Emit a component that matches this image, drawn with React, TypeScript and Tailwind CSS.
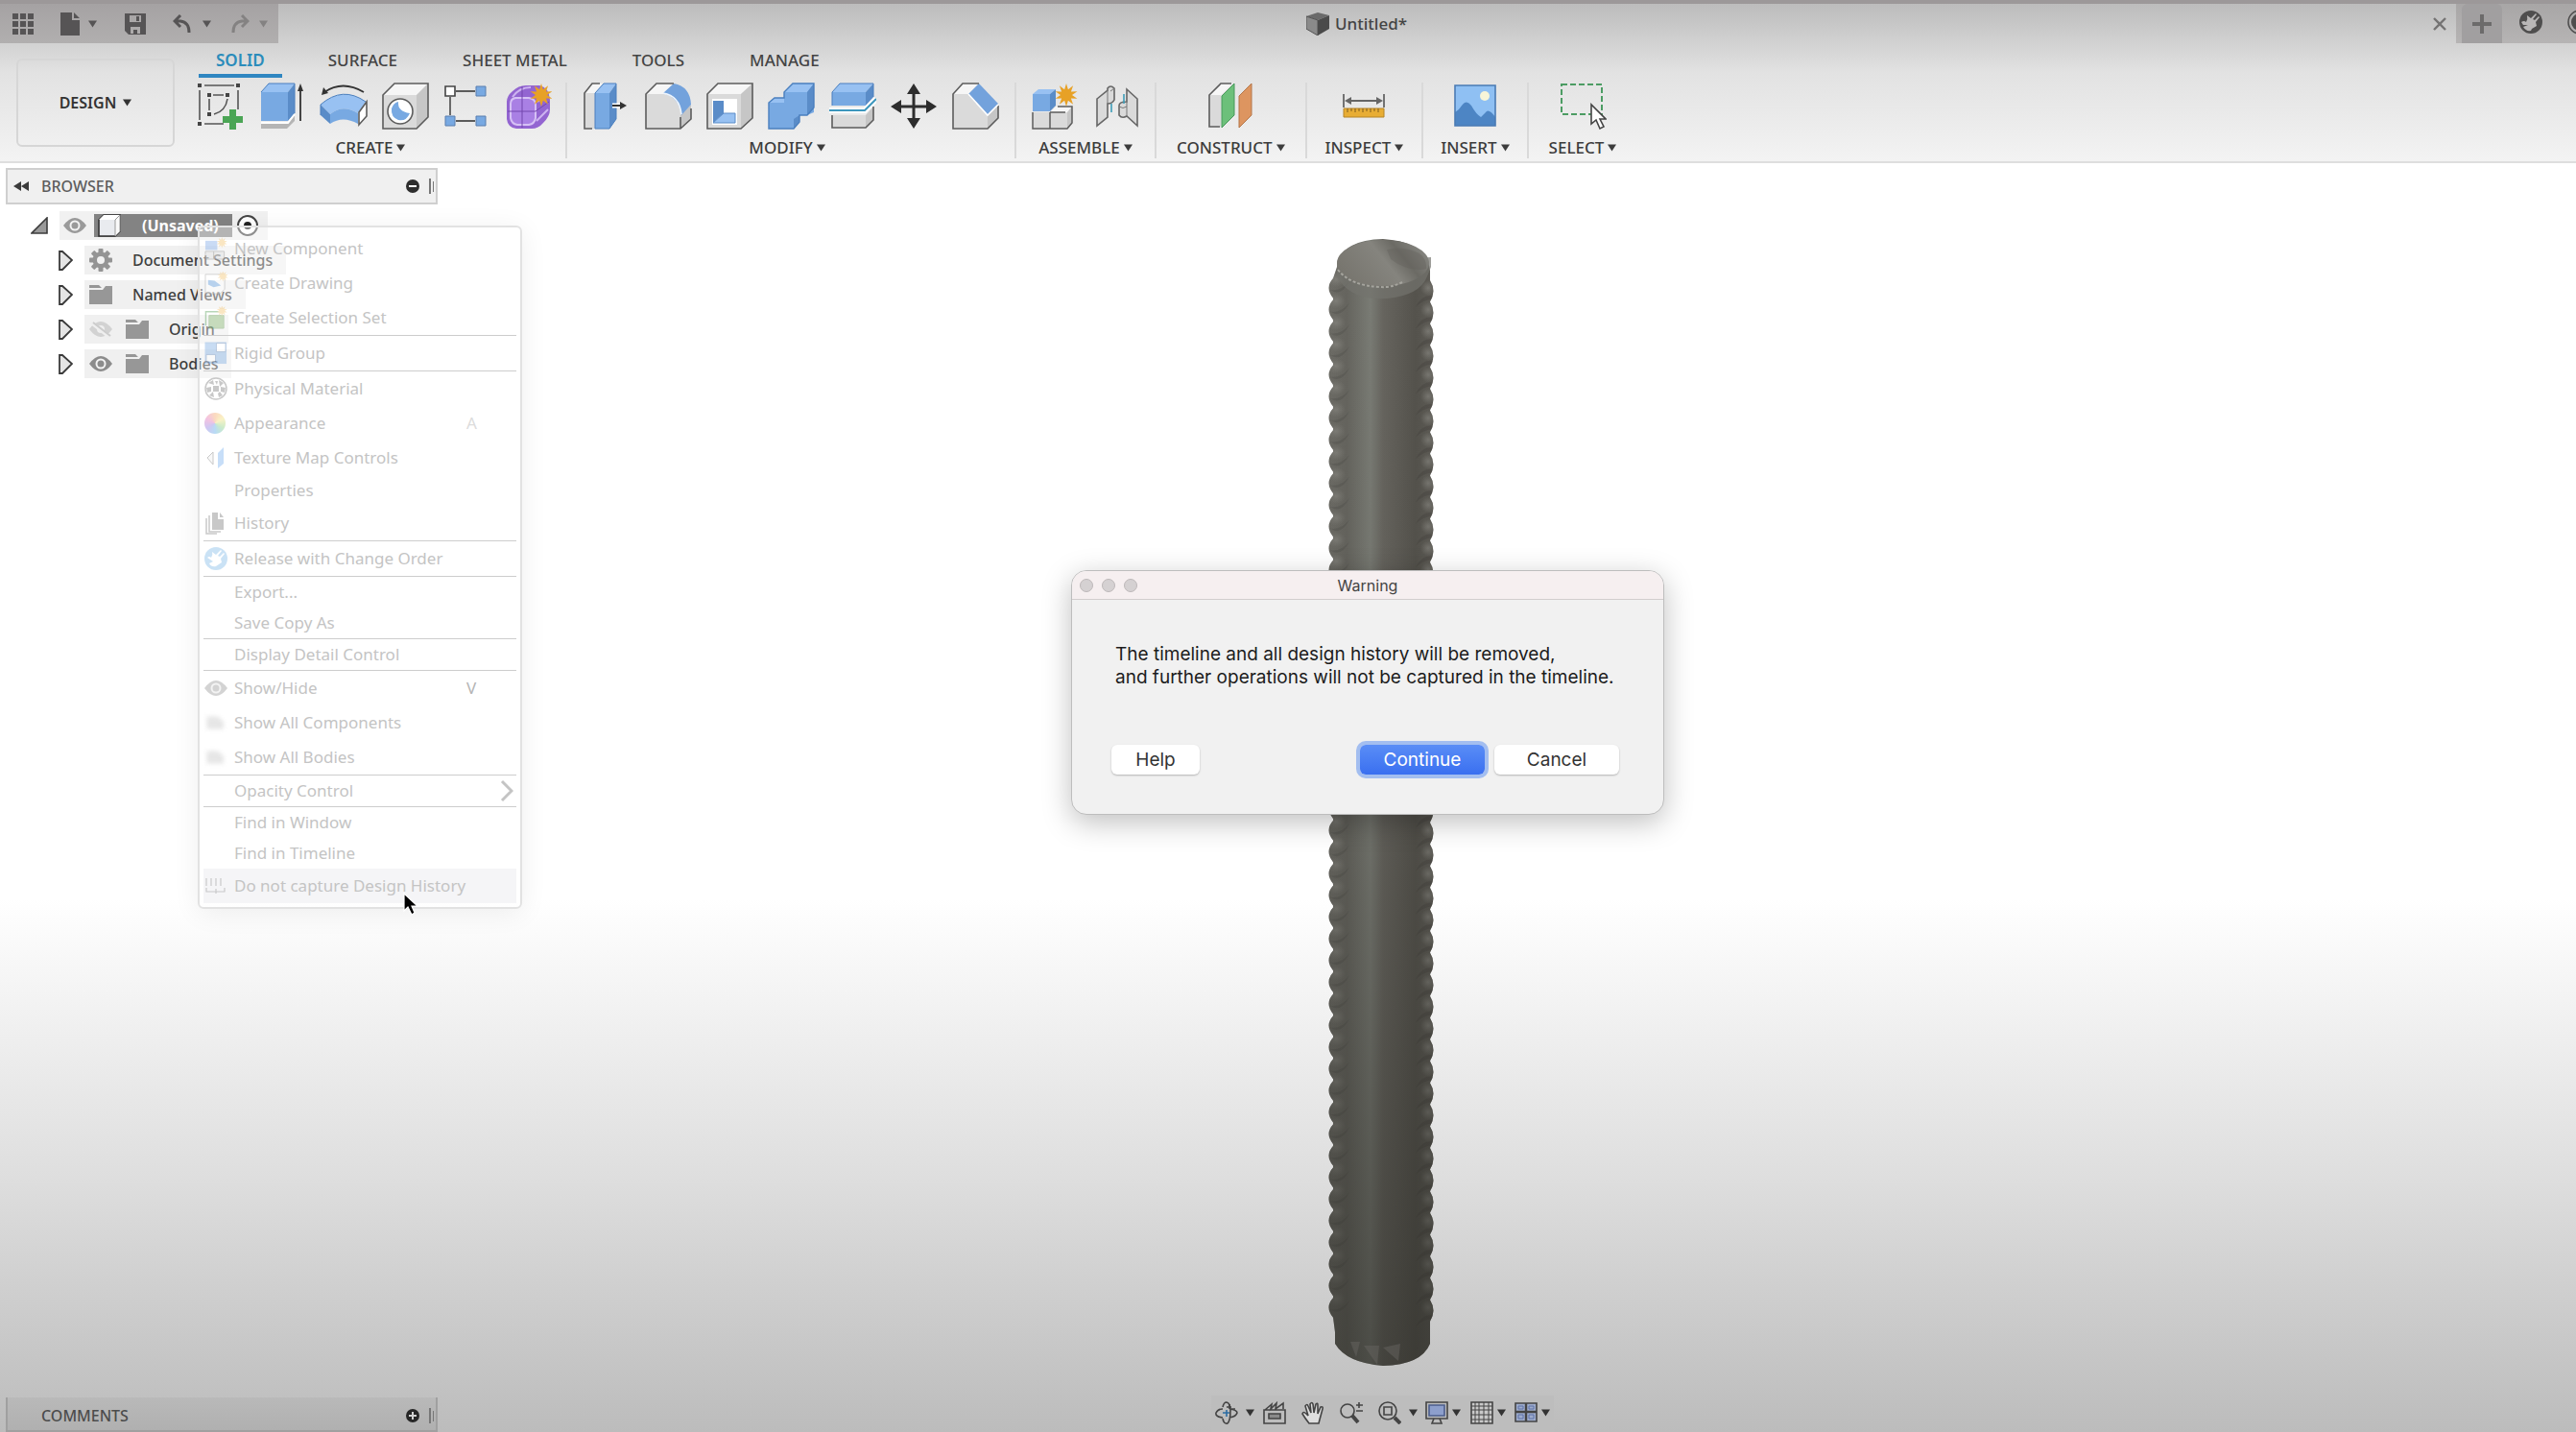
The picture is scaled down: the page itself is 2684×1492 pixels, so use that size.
import type { ReactNode } from "react";
import clsx from "clsx";

const EDGE = "#5c5c5c";
const BLUE = "#78a9e2";
const BLUE_TOP = "#98c1f2";
const BLUE_SIDE = "#5a8cc8";
const GREY = "#dadada";
const GREY_TOP = "#f6f6f6";
const GREY_SIDE = "#c6c6c6";

function Caret({ className }: { className?: string }) {
  return (
    <svg viewBox="0 0 10 8" className={clsx("h-2 w-[9px] shrink-0", className)} aria-hidden="true">
      <path d="M0 0H10L5 8Z" fill="currentColor" />
    </svg>
  );
}

function Star({ x, y, faint }: { x: number; y: number; faint?: boolean }) {
  const points = Array.from({ length: 20 }, (_, i) => {
    const r = i % 2 ? 6 : 12;
    const a = (i * Math.PI) / 10;
    return `${(x + r * Math.sin(a)).toFixed(1)},${(y - r * Math.cos(a)).toFixed(1)}`;
  }).join(" ");
  return <polygon points={points} fill={faint ? "#f3c169" : "#e7a126"} />;
}

function ToolIcon({ children }: { children: ReactNode }) {
  return (
    <svg viewBox="0 0 50 50" className="h-[50px] w-[50px]" fill="none" aria-hidden="true">
      {children}
    </svg>
  );
}

const icons: Record<string, ReactNode> = {
  "Create Sketch": (
    <ToolIcon>
      <path d="M8 3H39M3 8V39M8 43H28M43 8V28M17 13H28M13 17V29M32 17Q30 30 18 33" stroke="#555" strokeWidth="1.6" />
      <path d="M1 1h4v4h-4zM41 1h4v4h-4zM1 41h4v4h-4zM11 11h4v4h-4zM30 11h4v4h-4zM11 31h4v4h-4z" fill="#444" />
      <path d="M34 28h7v7h7v7h-7v7h-7v-7h-7v-7h7z" fill="#4ba555" />
    </ToolIcon>
  ),
  Extrude: (
    <ToolIcon>
      <path d="M3 43H30L38 34V40L30 48H3Z" fill="#b5b5b5" />
      <path d="M3 10H31V40H3Z" fill={BLUE} />
      <path d="M3 10L11 1H38L31 10Z" fill={BLUE_TOP} />
      <path d="M31 10L38 1V32L31 40Z" fill={BLUE_SIDE} />
      <path d="M3 42H31L38 33" stroke="#fff" strokeWidth="2" />
      <path d="M3 10L11 1H38V32" stroke="#4a7fbe" />
      <path d="M44 8V40" stroke="#333" strokeWidth="1.8" />
      <path d="M44 1L47 9H41Z" fill="#333" />
    </ToolIcon>
  ),
  Revolve: (
    <ToolIcon>
      <path d="M46 10Q24 -3 5 10" stroke="#333" strokeWidth="1.8" />
      <path d="M2 13L4 5L9 11Z" fill="#333" />
      <path d="M1 23Q24 3 48 20L40 32Q24 22 11 33Z" fill={BLUE_TOP} />
      <path d="M1 23L11 33V43L1 34Z" fill={BLUE_SIDE} />
      <path d="M11 33Q24 22 40 32V43Q24 34 11 43Z" fill={BLUE} />
      <path d="M1 34V23Q24 3 48 20" stroke="#4a7fbe" />
      <path d="M41 31L49 20V35L41 44Z" fill="#fff" stroke={EDGE} strokeWidth="1.6" />
    </ToolIcon>
  ),
  Hole: (
    <ToolIcon>
      <path d="M2 13H37V48H2Z" fill={GREY} />
      <path d="M2 13L14 1H49L37 13Z" fill={GREY_TOP} />
      <path d="M37 13L49 1V36L37 48Z" fill={GREY_SIDE} />
      <path d="M2 13L14 1H49V36L37 48H2Z" stroke={EDGE} strokeWidth="1.6" />
      <circle cx="20" cy="30" r="13" fill="#fff" stroke={EDGE} strokeWidth="1.6" />
      <path d="M18 20Q17 30 30 32Q26 41 18 39Q10 36 11 27Q13 21 18 20Z" fill={BLUE} />
    </ToolIcon>
  ),
  Pattern: (
    <ToolIcon>
      <path d="M14 9H34M8 15V34M14 40H34" stroke={EDGE} strokeWidth="1.8" />
      <path d="M3 4h10v10h-10z" fill="#fff" stroke="#444" strokeWidth="1.6" />
      <path d="M35 4h10v10h-10zM3 35h10v10h-10zM35 35h10v10h-10z" fill={BLUE} stroke="#5b7fae" />
    </ToolIcon>
  ),
  "Create Form": (
    <ToolIcon>
      <path d="M3 20Q3 14 9 9Q15 3 23 3H37Q47 5 48 18V28Q48 35 41 42Q36 48 29 48H13Q4 47 3 38Z" fill="#9365d1" />
      <path d="M7 22Q7 17 12 16H26Q33 17 33 23V37Q32 43 26 44H14Q8 43 7 37Z" fill="#a980e4" stroke="#d6c1f5" strokeWidth="2" />
      <path d="M9 15Q16 5 28 5M35 20L43 12M34 40L46 28" stroke="#cdb4f0" strokeWidth="2" />
      <path d="M19 4V47M4 30H33L47 20" stroke="#7247ad" />
      <Star x={39} y={13} />
    </ToolIcon>
  ),
  "Press Pull": (
    <ToolIcon>
      <path d="M2 11H13V48H2Z" fill={GREY} />
      <path d="M2 11L10 1H21L13 11Z" fill={GREY_TOP} />
      <path d="M10 48H2V11L10 1H18" stroke={EDGE} strokeWidth="1.6" />
      <path d="M13 11H28V48H13Z" fill={BLUE} />
      <path d="M13 11L22 1H35L28 11Z" fill={BLUE_TOP} />
      <path d="M28 11L35 1V38L28 48Z" fill={BLUE_SIDE} />
      <path d="M13 48V11L22 1H35V38L28 48Z" stroke="#4a7fbe" />
      <path d="M31 24H42" stroke="#fff" strokeWidth="5" />
      <path d="M31 24H42" stroke="#333" strokeWidth="2" />
      <path d="M39 20L46 24L39 28Z" fill="#333" />
    </ToolIcon>
  ),
  Fillet: (
    <ToolIcon>
      <path d="M2 12H20Q37 14 38 35V48H2Z" fill={GREY} />
      <path d="M2 12L13 1H31L20 12Z" fill={GREY_TOP} />
      <path d="M38 34L49 23V38L38 48Z" fill={GREY_SIDE} />
      <path d="M20 11L31 1Q48 4 49 23L39 34Q37 16 20 11Z" fill="#73a2dc" />
      <path d="M31 1H13L2 12V48H38L49 38V27M38 48V36" stroke={EDGE} strokeWidth="1.6" />
      <path d="M20 11Q37 14 39 33" stroke="#eef5fd" strokeWidth="1.6" />
    </ToolIcon>
  ),
  Shell: (
    <ToolIcon>
      <path d="M2 12H37V48H2Z" fill={GREY} />
      <path d="M2 12L13 1H49L37 12Z" fill={GREY_TOP} />
      <path d="M37 12L49 1V37L37 48Z" fill={GREY_SIDE} />
      <path d="M2 12L13 1H49V37L37 48H2Z" stroke={EDGE} strokeWidth="1.6" />
      <path d="M7 17H33V44H7Z" fill="#fff" />
      <path d="M8 19H19V32L8 42Z" fill={BLUE_SIDE} />
      <path d="M19 32H31V42H8Z" fill={BLUE_TOP} stroke={BLUE_SIDE} />
    </ToolIcon>
  ),
  Combine: (
    <ToolIcon>
      <path d="M2 21L8 16H18V10L27 1H49V31L42 34H34V40L28 48H2Z" fill={BLUE} />
      <path d="M18 10L27 1H49L42 10ZM2 21L8 16H18V21Z" fill={BLUE_TOP} />
      <path d="M42 10L49 1V26L42 34ZM28 38L34 34V40L28 48Z" fill={BLUE_SIDE} />
      <path d="M2 21L8 16H18V10L27 1H49V26L42 34H34V41L28 48H2Z" stroke="#4a7fbe" strokeWidth="1.4" />
    </ToolIcon>
  ),
  "Split Body": (
    <ToolIcon>
      <path d="M4 10H39V24H4Z" fill={BLUE} />
      <path d="M4 10L12 1H47L39 10Z" fill={BLUE_TOP} />
      <path d="M39 10L47 1V15L39 24Z" fill={BLUE_SIDE} />
      <path d="M4 24V10L12 1H47V15" stroke="#4a7fbe" />
      <path d="M4 34H39V47H4Z" fill={GREY} />
      <path d="M39 34L47 25V39L39 47Z" fill={GREY_SIDE} />
      <path d="M4 34V47H39L47 39V25" stroke={EDGE} strokeWidth="1.6" />
      <path d="M1 29H38L50 17" stroke="#fff" strokeWidth="6" />
      <path d="M1 29H38L50 17" stroke="#3d97bd" strokeWidth="2" />
    </ToolIcon>
  ),
  Move: (
    <ToolIcon>
      <path d="M25 8V41M8 25H42" stroke="#2d2d2d" strokeWidth="3" />
      <path d="M25 1L32 12H18ZM25 48L32 37H18ZM1 25L12 18V32ZM49 25L38 18V32Z" fill="#2d2d2d" />
    </ToolIcon>
  ),
  Chamfer: (
    <ToolIcon>
      <path d="M2 12H18L38 34V48H2Z" fill={GREY} />
      <path d="M2 12L12 1H29L18 12Z" fill={GREY_TOP} />
      <path d="M38 34L49 22V37L38 48Z" fill={GREY_SIDE} />
      <path d="M18 12L29 1L49 22L38 34Z" fill="#73a2dc" />
      <path d="M29 1H12L2 12V48H38L49 37V24" stroke={EDGE} strokeWidth="1.6" />
      <path d="M18 12L38 34L49 23" stroke="#fff" strokeWidth="1.6" />
    </ToolIcon>
  ),
  "New Component": (
    <ToolIcon>
      <path d="M2 31H20V48H2ZM20 31H38V48H20Z" fill={GREY} />
      <path d="M20 31L26 25H43L38 31Z" fill={GREY_TOP} />
      <path d="M38 31L43 25V42L38 48Z" fill={GREY_SIDE} />
      <path d="M2 31V48H38L43 42V25H28M20 31V48M20 31H36" stroke={EDGE} strokeWidth="1.5" />
      <path d="M2 12H20V30H2Z" fill={BLUE} />
      <path d="M2 12L8 7H26L20 12Z" fill={BLUE_TOP} />
      <path d="M20 12L26 7V24L20 30Z" fill={BLUE_SIDE} />
      <Star x={37} y={13} />
    </ToolIcon>
  ),
  Joint: (
    <ToolIcon>
      <path d="M5 17L16 8V6Q19 2 23 6V18Q21 22 16 22V36L5 45Z" fill={GREY} stroke="#666" strokeWidth="1.6" />
      <path d="M16 8V22M23 6L19 9" stroke="#777" />
      <path d="M47 17L36 7V20Q28 20 28 24V34Q31 38 36 35L47 45Z" fill={GREY} stroke="#666" strokeWidth="1.6" />
      <path d="M36 20V35M28 25Q32 28 36 25" stroke="#777" />
      <path d="M20 22V31M33 12V22" stroke="#3d9db8" strokeWidth="1.6" />
    </ToolIcon>
  ),
  "Offset Plane": (
    <ToolIcon>
      <path d="M3 13H15V46H3Z" fill={GREY} />
      <path d="M3 13L15 1H27L15 13Z" fill={GREY_TOP} />
      <path d="M14 46H3V13L15 1H26" stroke={EDGE} strokeWidth="1.6" />
      <path d="M16 14L29 1V34L16 47Z" fill="#6cc07a" stroke="#47985a" />
      <path d="M34 14L47 1V34L34 47Z" fill="#dd9560" stroke="#b4774b" />
    </ToolIcon>
  ),
  Measure: (
    <ToolIcon>
      <path d="M4 12V26M46 12V26M8 19H42" stroke="#666" strokeWidth="1.8" />
      <path d="M5 19L12 15V23ZM45 19L38 15V23Z" fill="#666" />
      <path d="M4 27H46V36H4Z" fill="#e8ad34" stroke="#b58427" />
      <path d="M8 27v4M12 27v3M16 27v4M20 27v3M24 27v4M28 27v3M32 27v4M36 27v3M40 27v4" stroke="#7c5b1c" />
    </ToolIcon>
  ),
  "Insert Canvas": (
    <ToolIcon>
      <path d="M4 3H46V45H4Z" fill="#8fc0f3" />
      <path d="M4 31Q8 29 11 24Q16 17 21 24Q26 33 31 36L37 30Q40 28 46 36V45H4Z" fill="#4d85c4" />
      <circle cx="35" cy="14" r="5" fill="#f7f5d8" />
      <path d="M4 3H46V45H4Z" stroke="#4a7bb4" strokeWidth="1.6" />
    </ToolIcon>
  ),
  "Window Select": (
    <ToolIcon>
      <path d="M3 2H45V33H3Z" stroke="#4c9c63" strokeWidth="2" strokeDasharray="6 3" />
      <path d="M34 23V43L39 39L43 48L47 46L43 38H49Z" fill="#fff" stroke="#444" strokeWidth="1.6" />
    </ToolIcon>
  ),
};

const tabs = ["SOLID", "SURFACE", "SHEET METAL", "TOOLS", "MANAGE"];

const groups = [
  { label: "CREATE", pad: "px-[14px]", tools: ["Create Sketch", "Extrude", "Revolve", "Hole", "Pattern", "Create Form"] },
  { label: "MODIFY", pad: "px-[16px]", tools: ["Press Pull", "Fillet", "Shell", "Combine", "Split Body", "Move", "Chamfer"] },
  { label: "ASSEMBLE", pad: "px-[15px]", tools: ["New Component", "Joint"] },
  { label: "CONSTRUCT", pad: "px-[21px]", tools: ["Offset Plane"] },
  { label: "INSPECT", pad: "px-[19px]", tools: ["Measure"] },
  { label: "INSERT", pad: "px-[18px]", tools: ["Insert Canvas"] },
  { label: "SELECT", pad: "px-[21px]", tools: ["Window Select"] },
];

function GearHead({ className }: { className?: string }) {
  return (
    <svg viewBox="0 0 24 24" className={className} aria-hidden="true">
      <circle cx="12" cy="12" r="12" fill="currentColor" />
      <path
        d="M2 12Q5 10 7 12Q9 9 8 5L12 8L17 3L18 4L14 9L16 10L20 6L21 7L17 12L18 16L13 19L12 21Q7 22 4 17L9 15L4 15Z"
        fill="#b9b7b7"
      />
    </svg>
  );
}

function TitleBar() {
  return (
    <div className="flex h-[45px] items-stretch border-t-4 border-[#9c9899]">
      <div className="flex w-[290px] items-center bg-linear-to-b from-[#a5a2a3] to-[#b1afaf] pl-[13px] text-[#565455]">
        <button aria-label="Show Data Panel" className="mr-[28px]">
          <svg viewBox="0 0 22 22" className="h-[22px] w-[22px]" fill="currentColor">
            <path d="M0 0h6v6H0zM8 0h6v6H8zM16 0h6v6h-6zM0 8h6v6H0zM8 8h6v6H8zM16 8h6v6h-6zM0 16h6v6H0zM8 16h6v6H8zM16 16h6v6h-6z" />
          </svg>
        </button>
        <button aria-label="File" className="mr-[29px] flex items-center gap-[9px]">
          <svg viewBox="0 0 20 24" className="h-6 w-5" fill="currentColor">
            <path d="M0 0H12V8H20V24H0ZM14 0L20 6H14Z" />
          </svg>
          <Caret />
        </button>
        <button aria-label="Save" className="mr-[28px]">
          <svg viewBox="0 0 22 22" className="h-[22px] w-[22px]" fill="currentColor" fillRule="evenodd">
            <path d="M0 0H22V22H4L0 18ZM5 2V9H17V2ZM6 14V21H9V17H13V21H16V14ZM12 3H15V8H12Z" />
          </svg>
        </button>
        <button aria-label="Undo" className="mr-[20px] flex items-center gap-[11px]">
          <svg viewBox="0 0 20 20" className="h-5 w-5" fill="none" stroke="currentColor" strokeWidth="3">
            <path d="M8 1L2 7L8 13M2 7H8Q17 8 17 19" />
          </svg>
          <Caret />
        </button>
        <button aria-label="Redo" className="flex items-center gap-[10px] text-[#848282]">
          <svg viewBox="0 0 20 20" className="h-5 w-5" fill="none" stroke="currentColor" strokeWidth="3">
            <path d="M12 1L18 7L12 13M18 7H12Q3 8 3 19" />
          </svg>
          <Caret />
        </button>
      </div>
      <div className="flex flex-1 items-center rounded-t-md pr-[10px]">
        <div className="flex flex-1 items-center justify-center gap-[6px] pl-[2px] text-[17px] font-medium text-[#444]">
          <svg viewBox="0 0 24 24" className="h-6 w-6" aria-hidden="true">
            <path d="M0 4L12 0L24 3L12 8Z" fill="#6a6a6a" />
            <path d="M0 4L12 8V24L0 17Z" fill="#8a8a8a" stroke="#555" />
            <path d="M12 8L24 3V17L12 24Z" fill="#4a4a4a" />
          </svg>
          Untitled*
        </div>
        <button aria-label="Close tab" className="text-[#747373]">
          <svg viewBox="0 0 14 14" className="h-[14px] w-[14px]" stroke="currentColor" strokeWidth="2.4">
            <path d="M1 1L13 13M13 1L1 13" />
          </svg>
        </button>
      </div>
      <div className="flex w-[125px] items-center overflow-hidden bg-linear-to-b from-[#a8a6a6] to-[#b6b4b4] pl-[6px] text-[#4f4e4e]">
        <button aria-label="New tab" className="mr-[18px] flex h-full w-[42px] shrink-0 items-center justify-center rounded-t-md bg-[#a19fa0] text-[#6c6b6b]">
          <svg viewBox="0 0 20 20" className="h-5 w-5" fill="currentColor">
            <path d="M8 0h4v8h8v4h-8v8h-4v-8h-8v-4h8z" />
          </svg>
        </button>
        <button aria-label="Job status" className="mb-1 mr-[26px] shrink-0">
          <GearHead className="h-6 w-6" />
        </button>
        <button aria-label="Profile" className="mb-1 shrink-0">
          <svg viewBox="0 0 26 26" className="h-[26px] w-[26px]">
            <circle cx="13" cy="13" r="12" fill="none" stroke="currentColor" strokeWidth="1.6" />
            <circle cx="13" cy="13" r="9" fill="currentColor" />
          </svg>
        </button>
      </div>
    </div>
  );
}

function Ribbon() {
  return (
    <div className="flex text-[17px] leading-5 font-medium text-[#444]">
      <button className="mt-4 ml-[17px] flex h-[92px] w-[165px] items-center justify-center gap-[7px] rounded-md border-2 border-[#d6d6d6] text-[16px] font-semibold text-[#333]">
        DESIGN
        <Caret />
      </button>
      <div className="ml-[9px]">
        <nav className="flex gap-[22px] pl-4">
          {tabs.map((tab, i) => (
            <button
              key={tab}
              className={clsx(
                "h-9 border-b-4 pt-1",
                i === 0 ? "mr-[3px] border-[#2f86c1] px-[18px] font-semibold text-[#2b8cbb]" : "border-transparent px-[23px]",
              )}
            >
              {tab}
            </button>
          ))}
        </nav>
        <div className="mt-[5px] flex">
          {groups.map(({ label, pad, tools }, g) => (
            <div
              key={label}
              className={clsx("mb-[3px] flex h-[79px] flex-col items-center", pad, g < groups.length - 1 && "border-r-2 border-[#d9d9d9]")}
            >
              <div className="flex gap-[14px]">
                {tools.map((tool) => (
                  <button key={tool} aria-label={tool}>
                    {icons[tool]}
                  </button>
                ))}
              </div>
              <button className={clsx("mt-2 flex items-center gap-1 text-[#3c3c3c]", tools.length > 2 && "mr-2")}>
                {label}
                <Caret />
              </button>
            </div>
          ))}
        </div>
      </div>
    </div>
  );
}

function Eye({ className }: { className?: string }) {
  return (
    <svg viewBox="0 0 24 16" className={clsx("h-4 w-6 shrink-0", className)} aria-hidden="true">
      <path d="M0 8Q12 -8 24 8Q12 24 0 8Z" fill="currentColor" />
      <circle cx="12" cy="8" r="5.500" fill="#f3f3f3" />
      <circle cx="12" cy="8" r="3.500" fill="currentColor" />
    </svg>
  );
}

function EyeOff() {
  return (
    <svg viewBox="0 0 24 18" className="h-[18px] w-6 shrink-0" aria-hidden="true">
      <path d="M0 9Q12 -7 24 9Q12 25 0 9Z" fill="#d2d2d2" />
      <circle cx="12" cy="9" r="4" fill="#efefef" />
      <path d="M2 2L21 17" stroke="#efefef" strokeWidth="4" />
      <path d="M4 2L22 16" stroke="#cccccc" strokeWidth="2" />
    </svg>
  );
}

function Folder() {
  return (
    <svg viewBox="0 0 24 20" className="h-5 w-6 shrink-0" aria-hidden="true">
      <path d="M0 0H10L13 3H0ZM0 5H14L17 1H24V20H0Z" fill="#979797" />
    </svg>
  );
}

function Gear() {
  return (
    <svg viewBox="0 0 24 24" className="h-6 w-6 shrink-0" aria-hidden="true">
      <g fill="#949494">
        {[0, 45, 90, 135].map((angle) => (
          <rect key={angle} x="9.500" y="0" width="5" height="24" rx="1" transform={`rotate(${angle} 12 12)`} />
        ))}
        <circle cx="12" cy="12" r="8.500" />
      </g>
      <circle cx="12" cy="12" r="4" fill="#f1f1f1" />
    </svg>
  );
}

const tree = [
  { label: "Document Settings", leading: [<Gear key="gear" />] },
  { label: "Named Views", leading: [<Folder key="folder" />] },
  { label: "Origin", leading: [<EyeOff key="eye" />, <Folder key="folder" />] },
  { label: "Bodies", leading: [<Eye key="eye" className="text-[#8c8c8c]" />, <Folder key="folder" />] },
];

function Grip() {
  return (
    <svg viewBox="0 0 5 16" className="h-4 w-[5px]" aria-hidden="true">
      <path d="M0 0H2V16H0ZM4 3H5V14H4Z" fill="#777" />
    </svg>
  );
}

function Browser() {
  return (
    <aside className="w-[456px] pt-[5px] pl-[6px] text-[16px] leading-5 font-medium text-[#444]">
      <div className="flex h-[38px] items-center border-2 border-[#cfcfcf] bg-[#f0f0f0] pr-[2px] pl-[6px]">
        <button aria-label="Collapse browser">
          <svg viewBox="0 0 16 10" className="h-[10px] w-4">
            <path d="M8 0V10L0 5ZM16 0V10L8 5Z" fill="#3b3b3b" />
          </svg>
        </button>
        <span className="ml-[13px] flex-1 text-[#5c5c5c]">BROWSER</span>
        <button aria-label="Hide browser contents" className="mr-[10px]">
          <svg viewBox="0 0 14 14" className="h-[14px] w-[14px]">
            <circle cx="7" cy="7" r="7" fill="#2e2e2e" />
            <path d="M3 7H11" stroke="#fff" strokeWidth="2" />
          </svg>
        </button>
        <Grip />
      </div>
      <ul className="mt-1">
        <li className="flex h-9 items-center pl-[26px]">
          <svg viewBox="0 0 18 18" className="mr-3 h-[18px] w-[18px]">
            <path d="M1 17H17V1Z" fill="#999" stroke="#3c3c3c" strokeWidth="1.6" />
          </svg>
          <div className="flex h-[30px] items-center bg-[#f1f1f1] pr-[11px] pl-[4px]">
            <Eye className="text-[#9a9a9a]" />
            <div className="mr-[6px] ml-2 flex h-6 items-center bg-[#838383] pr-[14px] pl-1">
              <svg viewBox="0 0 24 24" className="mr-[22px] h-6 w-6">
                <path d="M1 6L6 1H23V18L18 23H1Z" fill="#e9ebef" stroke="#333" strokeWidth="1.6" />
                <path d="M1 6L6 1H23L18 6Z" fill="#fff" />
                <path d="M18 6L23 1V18L18 23Z" fill="#fafafa" stroke="#999" />
              </svg>
              <span className="font-bold text-white">(Unsaved)</span>
            </div>
            <input
              type="radio"
              name="active-component"
              aria-label="Activate component"
              defaultChecked
              className="h-5 w-5 appearance-none rounded-full border-[6px] border-white bg-[#222] outline-2 -outline-offset-1 outline-[#444]"
            />
          </div>
        </li>
        {tree.map(({ label, leading }) => (
          <li key={label} className="flex h-9 items-center pl-[55px]">
            <button aria-label={`Expand ${label}`} className="mr-3">
              <svg viewBox="0 0 15 21" className="h-[21px] w-[15px]">
                <path d="M1 1H4L14 10L4 20H1Z" fill="#e4e4e4" stroke="#3a3a3a" strokeWidth="1.8" />
              </svg>
            </button>
            <div className="flex h-[30px] items-center gap-[14px] bg-[#f0f0f0] pr-[14px] pl-[5px]">
              {leading}
              <span className="ml-[7px] text-[#3e3e3e]">{label}</span>
            </div>
          </li>
        ))}
      </ul>
    </aside>
  );
}

function MenuIcon({ children, box = "0 0 50 50" }: { children: ReactNode; box?: string }) {
  return (
    <svg viewBox={box} className="h-6 w-6 opacity-40" fill="none" aria-hidden="true">
      {children}
    </svg>
  );
}

type MenuEntry = { label: string; icon?: ReactNode; shortcut?: string; submenu?: boolean; active?: boolean; divider?: boolean };

const softFolder = (
  <svg viewBox="0 0 24 20" className="h-4 w-6 opacity-70 blur-[2px]">
    <path d="M0 2H14L22 8V18H0Z" fill="#dcdcdc" />
  </svg>
);

const menu: MenuEntry[] = [
  {
    label: "New Component",
    icon: (
      <MenuIcon>
        <path d="M2 31H20V48H2ZM20 31H43V48H20Z" fill="#ddd" stroke="#888" strokeWidth="2" />
        <path d="M2 8H28V28H2Z" fill="#7aa7e8" />
        <Star x={38} y={12} faint />
      </MenuIcon>
    ),
  },
  {
    label: "Create Drawing",
    icon: (
      <MenuIcon>
        <path d="M2 6H44V38L34 48H2Z" fill="#fff" stroke="#999" strokeWidth="2" />
        <path d="M8 18L22 20L36 30L20 34L8 28Z" fill="#5a9be0" />
        <Star x={40} y={10} faint />
      </MenuIcon>
    ),
  },
  {
    label: "Create Selection Set",
    divider: true,
    icon: (
      <MenuIcon>
        <path d="M3 42V12H34" stroke="#4f9a4f" strokeWidth="3" />
        <path d="M10 20H42V48H10Z" fill="#7fb567" stroke="#649a50" strokeWidth="2" />
        <Star x={38} y={10} faint />
      </MenuIcon>
    ),
  },
  {
    label: "Rigid Group",
    divider: true,
    icon: (
      <MenuIcon>
        <path d="M1 1H48V48H1Z" fill="#78a9e2" />
        <path d="M26 3H46V22H26ZM4 28H24V44H4Z" fill="#fff" stroke="#557fb5" strokeWidth="2" />
      </MenuIcon>
    ),
  },
  {
    label: "Physical Material",
    icon: (
      <MenuIcon box="0 0 24 24">
        <circle cx="12" cy="12" r="11" stroke="#777" strokeWidth="1.5" />
        <path d="M4 6l5-3 1 5zM15 3l5 3-4 4zM9 9h6v6H9zM2 11l5-1v5l-4 1zM17 10l5 1-1 5-4-1zM5 19l4-4 1 6zM14 17l2-2 3 4-4 2zM11 4h3l-1 4z" fill="#777" />
      </MenuIcon>
    ),
  },
  {
    label: "Appearance",
    shortcut: "A",
    icon: (
      <span className="block h-[22px] w-[22px] rounded-full bg-[conic-gradient(#f4a261,#f2df6f,#7fce7b,#4ea3e6,#8a72dd,#e069b4,#f4a261)] opacity-40" />
    ),
  },
  {
    label: "Texture Map Controls",
    icon: (
      <MenuIcon box="0 0 24 24">
        <path d="M3 12L9 6V19Z" fill="#eee" stroke="#777" />
        <path d="M14 7L20 1V18L14 23Z" fill="#74aef0" />
      </MenuIcon>
    ),
  },
  { label: "Properties" },
  {
    label: "History",
    divider: true,
    icon: (
      <MenuIcon box="0 0 24 24">
        <path d="M8 1H14V8H20V19H8Z" fill="#777" />
        <path d="M16 1L20 6H16Z" fill="#777" />
        <path d="M5 4V21H17M2 7V23H13" stroke="#777" strokeWidth="1.5" />
      </MenuIcon>
    ),
  },
  {
    label: "Release with Change Order",
    divider: true,
    icon: (
      <MenuIcon box="0 0 24 24">
        <circle cx="12" cy="12" r="12" fill="#7db8e8" />
        <path d="M3 11Q5 9 7 11Q9 8 8 5L12 8L17 3L18 4L14 9L16 10L20 6L21 7L17 12L18 16L12 20Q7 21 5 17L9 15Z" fill="#fff" />
      </MenuIcon>
    ),
  },
  { label: "Export..." },
  { label: "Save Copy As", divider: true },
  { label: "Display Detail Control", divider: true },
  { label: "Show/Hide", shortcut: "V", icon: <Eye className="text-[#d3d3d3]" /> },
  { label: "Show All Components", icon: softFolder },
  { label: "Show All Bodies", divider: true, icon: softFolder },
  { label: "Opacity Control", divider: true, submenu: true },
  { label: "Find in Window" },
  { label: "Find in Timeline" },
  {
    label: "Do not capture Design History",
    active: true,
    icon: (
      <MenuIcon box="0 0 24 24">
        <path d="M2 4V12M7 4V12M12 4V12M17 4V12M2 14V18H21V14M12 15V20" stroke="#888" strokeWidth="1.2" />
      </MenuIcon>
    ),
  },
];

function ContextMenu() {
  return (
    <div
      role="menu"
      className="absolute top-[65px] left-[206px] w-[338px] rounded-md border-2 border-[#e2e2e2] bg-white/40 px-1 py-1 text-[17px] leading-5 text-[#c4c4c4] shadow-[0_4px_28px_rgba(0,0,0,0.07)]"
    >
      {menu.map(({ label, icon, shortcut, submenu, active, divider }) => (
        <div key={label} className={clsx(divider && "border-b border-[#cdcdcd]")}>
          <button
            role="menuitem"
            className={clsx("flex w-full items-center text-left", icon ? "h-9" : "h-8", active && "bg-[#f5f5f7]")}
          >
            <span className="flex w-8 justify-start pl-px">{icon}</span>
            <span className="flex-1 whitespace-nowrap">{label}</span>
            {shortcut && <span className={clsx("mr-[38px] w-[14px]", shortcut === "A" ? "text-[#dcdcdc]" : "text-[#b5b5b5]")}>{shortcut}</span>}
            {submenu && (
              <svg viewBox="0 0 14 24" className="mr-[3px] h-6 w-[14px]" fill="none" stroke="#c4c4c4" strokeWidth="3">
                <path d="M2 2L12 12L2 22" />
              </svg>
            )}
          </button>
        </div>
      ))}
    </div>
  );
}

// Silhouette of the threaded rod: round cap, a bump per thread turn on both sides, round foot.
function rodOutline() {
  const pitch = 22.6;
  const turns = 49;
  const top = 34;
  let d = "M10 30Q14 2 58 1Q104 4 107 34V44";
  for (let i = 0; i < turns - 1; i++) {
    const y = top + 10 + i * pitch;
    d += `Q114 ${y + pitch / 2} 107 ${y + pitch}`;
  }
  d += "V1152Q98 1174 58 1175Q20 1172 8 1152V1140";
  for (let i = turns - 1; i > 0; i--) {
    const y = top - 4 + i * pitch;
    d += `L6 ${y + 10}Q-3 ${y - 1} 6 ${y - pitch + 12}`;
  }
  return d + "Z";
}

function Rod() {
  const rows = Array.from({ length: 48 }, (_, i) => 42 + i * 22.6);
  return (
    <svg viewBox="0 0 112 1176" className="absolute top-[78px] left-[1383px] h-[1176px] w-28" role="img" aria-label="Threaded rod">
      <defs>
        <linearGradient id="rod-body" x1="0" x2="1" y1="0" y2="0">
          <stop offset="0" stopColor="#6e6d67" />
          <stop offset="0.180" stopColor="#66655f" />
          <stop offset="0.400" stopColor="#7a7c75" />
          <stop offset="0.520" stopColor="#67655f" />
          <stop offset="0.820" stopColor="#55534d" />
          <stop offset="1" stopColor="#605e58" />
        </linearGradient>
        <linearGradient id="rod-shade" x1="0" x2="0" y1="0" y2="1">
          <stop offset="0" stopColor="#2a2a25" stopOpacity="0" />
          <stop offset="0.450" stopColor="#2a2a25" stopOpacity="0.100" />
          <stop offset="1" stopColor="#2a2a25" stopOpacity="0.580" />
        </linearGradient>
        <linearGradient id="rod-cap" x1="0" x2="1" y1="0.600" y2="0.200">
          <stop offset="0" stopColor="#77756e" />
          <stop offset="0.500" stopColor="#85847e" />
          <stop offset="0.700" stopColor="#6b6a64" />
          <stop offset="1" stopColor="#8b8b86" />
        </linearGradient>
        <radialGradient id="rod-bump">
          <stop offset="0" stopColor="#8d8c86" stopOpacity="0.600" />
          <stop offset="1" stopColor="#85847e" stopOpacity="0" />
        </radialGradient>
        <clipPath id="rod-clip">
          <path d={rodOutline()} />
        </clipPath>
      </defs>
      <g clipPath="url(#rod-clip)">
        <rect width="112" height="1176" fill="url(#rod-body)" />
        {rows.map((y) => (
          <g key={y}>
            <path d={`M3 ${y + 12}Q14 ${y + 14} 23 ${y + 3}Q14 ${y + 20} 3 ${y + 12}Z`} fill="#45443f" opacity="0.250" />
            <ellipse cx="9" cy={y + 1} rx="10" ry="8" fill="url(#rod-bump)" />
            <path d={`M109 ${y + 22}Q100 ${y + 22} 92 ${y + 30}Q98 ${y + 17} 109 ${y + 18}Z`} fill="#3f3d38" opacity="0.300" />
            <ellipse cx="105" cy={y + 10} rx="8" ry="8" fill="url(#rod-bump)" />
          </g>
        ))}
        <rect width="112" height="1176" fill="url(#rod-shade)" />
        <path d="M24 1150H34L30 1166ZM38 1154H54L52 1174ZM58 1156L76 1152L74 1170Z" fill="#66645f" opacity="0.500" />
      </g>
      <path d="M10 40Q24 66 62 63Q96 60 104 40L108 30V20L10 26Z" fill="#74736d" opacity="0.700" />
      <ellipse cx="58" cy="26" rx="48" ry="24" fill="url(#rod-cap)" />
      <path d="M11 33Q24 50 56 51Q66 52 78 46" fill="none" stroke="#a5a49d" strokeWidth="2" strokeDasharray="3 2" />
      <path d="M62 12Q80 8 96 16Q104 22 103 32Q84 36 66 22Z" fill="#63625d" opacity="0.400" />
    </svg>
  );
}

function WarningDialog() {
  return (
    <div
      role="dialog"
      aria-labelledby="warning-title"
      className="absolute top-[424px] left-[1116px] w-[618px] overflow-hidden rounded-2xl border border-[#bdbdbd] bg-[#f1f1f1] font-[Inter,sans-serif] shadow-[0_8px_30px_rgba(0,0,0,0.25)]"
    >
      <div className="flex h-[30px] items-center border-b border-[#d2cdce] bg-[#f6eff0] px-2">
        <div className="flex w-[60px] gap-[9px]">
          {["Close", "Minimize", "Zoom"].map((name) => (
            <button key={name} aria-label={name} className="h-[14px] w-[14px] rounded-full border border-[#bdb8b9] bg-[#d5d1d2]" />
          ))}
        </div>
        <h2 id="warning-title" className="flex-1 text-center text-[16px] leading-5 text-[#444]">
          Warning
        </h2>
        <div className="w-[60px]" />
      </div>
      <p className="pt-[45px] pl-[45px] text-[19px] leading-6 whitespace-nowrap text-[#1c1c1c]">
        The timeline and all design history will be removed,
        <br />
        and further operations will not be captured in the timeline.
      </p>
      <div className="flex pt-[58px] pr-[46px] pb-[41px] pl-[41px] text-[19px] leading-[31px] text-[#333]">
        <button className="mr-auto w-[92px] rounded-md bg-white shadow-[0_1px_2px_rgba(0,0,0,0.25)]">Help</button>
        <button className="mr-[10px] w-[130px] rounded-md bg-linear-to-b from-[#5a8df6] to-[#3a6ff0] text-white ring-4 ring-[#a3bef0]">
          Continue
        </button>
        <button className="w-[130px] rounded-md bg-white shadow-[0_1px_2px_rgba(0,0,0,0.25)]">Cancel</button>
      </div>
    </div>
  );
}

const navTools: { name: string; caret?: string; gap: string; art: ReactNode }[] = [
  {
    name: "Orbit",
    caret: "ml-2",
    gap: "mr-[9px]",
    art: (
      <>
        <path d="M8 17Q0 16 1 12Q3 8 8 8M15 8Q23 9 23 12Q22 16 15 17M8 6Q9 1 12 1Q16 2 16 10Q16 20 13 23Q9 24 8 18" />
        <path d="M8 12H15M12 9V16" stroke="#2d6da3" />
        <path d="M12 6H17M15 3V8M16 8H21" />
      </>
    ),
  },
  {
    name: "Look At",
    gap: "mr-[15px]",
    art: (
      <>
        <path d="M1 9H23V23H1ZM2 9L9 3L8 8L14 2L13 8L21 2V8" />
        <path d="M6 13H18V18H6Z" fill="#8a8a8a" />
      </>
    ),
  },
  {
    name: "Pan",
    gap: "mr-[15px]",
    art: (
      <path
        d="M8 23Q4 18 1 13Q2 10 5 13L7 15L4 5Q6 2 7 5L10 12L9 3Q11 0 12 3L13 12L15 3Q17 1 17 4L17 13L20 6Q23 5 22 8L19 19L18 23Z"
        fill="#dedede"
      />
    ),
  },
  {
    name: "Zoom",
    gap: "mr-[15px]",
    art: (
      <>
        <circle cx="8" cy="10" r="7" />
        <path d="M13 15L19 22" strokeWidth="4" />
        <path d="M17 4H24M20 1V7M17 10H24" />
      </>
    ),
  },
  {
    name: "Fit",
    caret: "ml-2",
    gap: "mr-[8px]",
    art: (
      <>
        <circle cx="10" cy="10" r="9" />
        <path d="M6 6H14V14H6Z" />
        <path d="M17 17L23 23" strokeWidth="4" />
      </>
    ),
  },
  {
    name: "Display Settings",
    caret: "ml-1",
    gap: "mr-[10px]",
    art: (
      <>
        <path d="M1 1H23V18H1Z" />
        <path d="M4 4H20V15H4Z" fill="#8d9fcc" stroke="#4b5d8c" />
        <path d="M9 18L7 23H17L15 18" />
      </>
    ),
  },
  {
    name: "Grid and Snaps",
    caret: "ml-1",
    gap: "mr-[9px]",
    art: (
      <>
        <path d="M1 1H23V23H1Z" fill="#c9c9c9" />
        <path d="M5 1V23M9 1V23M14 1V23M19 1V23M1 5H23M1 9H23M1 14H23M1 19H23" strokeWidth="1" />
      </>
    ),
  },
  {
    name: "Viewports",
    caret: "ml-1",
    gap: "",
    art: (
      <>
        <path d="M1 2H23V21H1Z" fill="#9dabcb" />
        <path d="M12 2V21M1 11H23" strokeWidth="2.400" />
        <path d="M4 5H9V8H4ZM15 5H20V8H15ZM4 14H9V18H4ZM15 14H20V18H15Z" stroke="#5f73a8" strokeWidth="1" />
      </>
    ),
  },
];

function BottomBar() {
  return (
    <footer className="mt-auto flex items-end">
      <div className="ml-[6px] flex h-9 w-[450px] items-center border-x-2 border-b-2 border-[#a0a0a0] bg-linear-to-b from-[#b9b9b9] to-[#b0b0b0] pt-[3px] pr-[2px] pl-[35px] text-[16px] leading-5 font-medium text-[#4c4c4c]">
        <span className="flex-1">COMMENTS</span>
        <button aria-label="Add comment" className="mr-[10px]">
          <svg viewBox="0 0 14 14" className="h-[14px] w-[14px]">
            <circle cx="7" cy="7" r="7" fill="#262626" />
            <path d="M3 7H11M7 3V11" stroke="#d0d0d0" strokeWidth="2" />
          </svg>
        </button>
        <Grip />
      </div>
      <div className="ml-[806px] flex h-[38px] items-center bg-[#bdbdbd] pr-1 pb-[2px] pl-1 text-[#333]">
        {navTools.map(({ name, caret, gap, art }) => (
          <button key={name} aria-label={name} className={clsx("flex items-center", gap, !caret && "pr-px")}>
            <svg viewBox="0 0 24 24" className="h-6 w-6" fill="none" stroke="#444" strokeWidth="1.600">
              {art}
            </svg>
            {caret && <Caret className={caret} />}
          </button>
        ))}
      </div>
    </footer>
  );
}

export default function App() {
  return (
    <div className="flex min-h-screen flex-col overflow-hidden bg-white font-['Noto_Sans',sans-serif]">
      <header className="border-b-2 border-[#dedede] bg-linear-to-b from-[#bababa] via-[#e2e2e2] via-45% to-[#f3f3f3]">
        <TitleBar />
        <Ribbon />
      </header>
      <main className="relative flex flex-1 flex-col bg-linear-to-b from-white from-58% via-[#dedede] via-80% to-[#bcbcbc]">
        <Browser />
        <Rod />
        <ContextMenu />
        <WarningDialog />
        <svg viewBox="0 0 16 24" className="absolute top-[760px] left-[420px] h-6 w-4" aria-hidden="true">
          <path d="M1 1V19L5 15L9 23L12 21L9 14H15Z" fill="#000" stroke="#fff" strokeWidth="1.200" />
        </svg>
        <BottomBar />
      </main>
    </div>
  );
}
